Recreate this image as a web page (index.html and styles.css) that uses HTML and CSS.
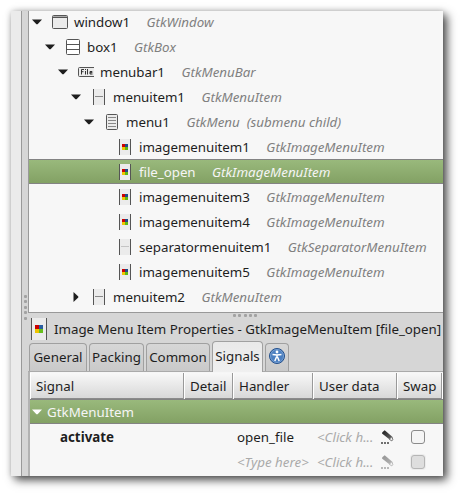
FILE: index.html
```
<!DOCTYPE html>
<html lang="en">
<head>
<meta charset="utf-8">
<title>Widget inspector</title>
<link rel="stylesheet" href="styles.css">
</head>
<body>
<svg class="defs" aria-hidden="true">
  <defs>
    <symbol id="down" viewBox="0 0 10 6"><path d="M0 .5h10L5.6 5.3H4.4z"/></symbol>
    <symbol id="right" viewBox="0 0 6 10"><path d="M.5 0v10L5.3 5.6V4.4z"/></symbol>
    <symbol id="win" viewBox="0 0 16 14"><rect x=".5" y=".5" width="15" height="13" rx="1" fill="#ebebeb" stroke="#555"/><path d="M1 1.5h14" stroke="#aaa"/><path d="M1 2.5h14" stroke="#555"/></symbol>
    <symbol id="box" viewBox="0 0 14 16"><rect x=".5" y=".5" width="13" height="15" rx="1" fill="#fff" stroke="#555"/><path d="M1 5.5h12M1 10.5h12" stroke="#555"/></symbol>
    <symbol id="bar" viewBox="0 0 16 10"><path d="M16 .5H1.5a1 1 0 0 0-1 1v7a1 1 0 0 0 1 1H16" fill="#ebebeb" stroke="#555"/><path d="M3.500 7.500v-5H6M3.500 4.700H5.500M7.500 4v3.500M7.500 2v1M9.500 2v5.500M14.500 7h-2.500v-2.500h2v1.200h-2" fill="none" stroke="#222" stroke-width=".9"/></symbol>
    <symbol id="item" viewBox="0 0 12 16"><path d="M0 0h12v16H0z" fill="#ebebeb"/><path d="M.5 0v16M11.500 0v16" stroke="#555"/><path d="M2 7.500h8" stroke="#888"/></symbol>
    <symbol id="sep" viewBox="0 0 12 16"><path d="M0 0h12v16H0z" fill="#ebebeb"/><path d="M.5 0v16M11.500 0v16" stroke="#555"/><path d="M2 7.500h8" stroke="#c4c4c4"/></symbol>
    <symbol id="menu" viewBox="0 0 12 16"><rect x=".5" y=".5" width="11" height="15" rx="1" fill="#ebebeb" stroke="#555"/><path d="M2 3.500h8M2 6.500h8M2 9.500h8M2 12.500h8" stroke="#888"/></symbol>
    <symbol id="img" viewBox="0 0 12 16"><path d="M0 0h12v16H0z" fill="#ebebeb"/><path d="M.5 0v16M11.500 0v16" stroke="#555"/><path d="M3 5h3v3H3z" fill="#c00"/><path d="M6 5h3v3H6z" fill="#204a87"/><path d="M3 8h3v3H3z" fill="#edc400"/><path d="M6 8h3v3H6z" fill="#5cb811"/></symbol>
    <symbol id="img-lg" viewBox="0 0 16 22"><path d="M0 0h16v22H0z" fill="#ebebeb"/><path d="M.5 0v22M15.500 0v22" stroke="#555"/><path d="M4 7h4v4H4z" fill="#c00"/><path d="M8 7h4v4H8z" fill="#2a5ea0"/><path d="M4 11h4v4H4z" fill="#edc400"/><path d="M8 11h4v4H8z" fill="#67bf1c"/></symbol>
    <linearGradient id="ink" x1="0" y1="0" x2="1" y2="1"><stop offset="0" stop-color="#1c1c1c"/><stop offset="1" stop-color="#666"/></linearGradient>
    <symbol id="pencil" viewBox="0 0 13 14"><path d="M1.300 2.200 3.700.3 11 6.500 8.300 9.300 1 3.500z" fill="url(#ink)"/><path d="M8.300 9.300 11 6.700l.8 3-1 1.200z" fill="#eee" stroke="#555" stroke-width=".8"/><path d="M0 13h2M3 13h2M6 13h2" stroke="#444" stroke-width="1.500"/></symbol>
  </defs>
</svg>
<main class="window">
  <div class="edge"></div>
  <div class="grip"><i></i><i></i><i></i><i></i><i></i></div>
  <div class="content">
    <section class="tree">
      <div class="row d0"><svg class="down"><use href="#down"/></svg><span class="icon"><svg width="16" height="14"><use href="#win"/></svg></span><b>window1</b><em>GtkWindow</em></div>
      <div class="row d1"><svg class="down"><use href="#down"/></svg><span class="icon"><svg width="14" height="16"><use href="#box"/></svg></span><b>box1</b><em>GtkBox</em></div>
      <div class="row d2"><svg class="down"><use href="#down"/></svg><span class="icon"><svg width="16" height="10"><use href="#bar"/></svg></span><b>menubar1</b><em>GtkMenuBar</em></div>
      <div class="row d3"><svg class="down"><use href="#down"/></svg><span class="icon"><svg width="12" height="16"><use href="#item"/></svg></span><b>menuitem1</b><em>GtkMenuItem</em></div>
      <div class="row d4"><svg class="down"><use href="#down"/></svg><span class="icon"><svg width="12" height="16"><use href="#menu"/></svg></span><b>menu1</b><em>GtkMenu&nbsp; (submenu child)</em></div>
      <div class="row d5"><span class="icon"><svg width="12" height="16"><use href="#img"/></svg></span><b>imagemenuitem1</b><em>GtkImageMenuItem</em></div>
      <div class="row d5 selected"><span class="icon"><svg width="12" height="16"><use href="#img"/></svg></span><b>file_open</b><em>GtkImageMenuItem</em></div>
      <div class="row d5"><span class="icon"><svg width="12" height="16"><use href="#img"/></svg></span><b>imagemenuitem3</b><em>GtkImageMenuItem</em></div>
      <div class="row d5"><span class="icon"><svg width="12" height="16"><use href="#img"/></svg></span><b>imagemenuitem4</b><em>GtkImageMenuItem</em></div>
      <div class="row d5"><span class="icon"><svg width="12" height="16"><use href="#sep"/></svg></span><b>separatormenuitem1</b><em>GtkSeparatorMenuItem</em></div>
      <div class="row d5"><span class="icon"><svg width="12" height="16"><use href="#img"/></svg></span><b>imagemenuitem5</b><em>GtkImageMenuItem</em></div>
      <div class="row d3"><svg class="right"><use href="#right"/></svg><span class="icon"><svg width="12" height="16"><use href="#item"/></svg></span><b>menuitem2</b><em>GtkMenuItem</em></div>
    </section>
    <div class="handle"><i></i><i></i><i></i><i></i><i></i></div>
    <h1 class="title"><svg width="16" height="22"><use href="#img-lg"/></svg><span>Image Menu Item Properties - GtkImageMenuItem [file_open]</span></h1>
    <nav class="tabs">
      <span class="tab general">General</span><span class="tab packing">Packing</span><span class="tab common">Common</span><span class="tab active">Signals</span><span class="tab access"><svg width="16" height="16" viewBox="0 0 16 16"><circle cx="8" cy="8" r="7.500" fill="#4b7fc0" stroke="#24508c"/><circle cx="8" cy="8" r="6.500" fill="none" stroke="#86abd8" stroke-width=".7"/><circle cx="8" cy="4" r="1.400" fill="#fff"/><path d="M3.500 6.500 8 7l4.500-.5M8 6.500v3M7.500 9l-1.700 4M8.500 9l1.700 4" fill="none" stroke="#fff" stroke-width="1.500"/></svg></span>
    </nav>
    <section class="table">
      <div class="grid head"><span>Signal</span><span>Detail</span><span>Handler</span><span>User data</span><span>Swap</span><span></span></div>
      <div class="group"><svg class="down"><use href="#down"/></svg><span>GtkMenuItem</span></div>
      <div class="grid line"><strong>activate</strong><span></span><span>open_file</span><span class="data"><em>&lt;Click h...</em><svg width="13" height="14"><use href="#pencil"/></svg></span><span class="swap"><i class="check"></i></span></div>
      <div class="grid line empty"><span></span><span></span><em>&lt;Type here&gt;</em><span class="data"><em>&lt;Click h...</em><svg width="13" height="14"><use href="#pencil"/></svg></span><span class="swap"><i class="check"></i></span></div>
    </section>
  </div>
</main>
</body>
</html>
```
FILE: styles.css
```
* { box-sizing: border-box; }
body { margin: 0; padding: 11px; width: 462px; height: 495px; overflow: hidden; background: #fff; color: #1e1e1e; font: 13.33px/24px "Noto Sans", sans-serif; }
.defs { position: absolute; width: 0; height: 0; }
svg { display: block; flex: none; }
i { display: block; flex: none; }
.window { width: 432px; height: 465px; display: flex; background: #d6d6d6; box-shadow: 4px 4px 9px rgba(0,0,0,.7), 0 0 6px rgba(0,0,0,.18); }
.edge { width: 10px; background: #ebebeb; }
.grip { width: 7px; border-left: 1px solid #999; display: flex; flex-direction: column; align-items: center; gap: 2.4px; padding: 284px 0 0; }
.grip i, .handle i { width: 3px; height: 3px; border-radius: 1px; background: #a2a2a2; }
.content { width: 415px; overflow: hidden; }
.tree { height: 302px; overflow: hidden; background: #f7f7f7; border-left: 1px solid #999; border-bottom: 1px solid #999; }
.row { height: 25px; display: flex; align-items: center; white-space: nowrap; }
.row:first-child { margin-top: -2px; }
.row b { font-weight: 400; letter-spacing: -.04px; }
.row em { margin-left: 16.5px; color: #808080; }
.d0 { padding-left: 3px; } .d1 { padding-left: 16px; } .d2 { padding-left: 29px; } .d3 { padding-left: 42px; } .d4 { padding-left: 55px; } .d5 { padding-left: 87px; }
.down { width: 10px; height: 6px; fill: #1e1e1e; }
.row .down { margin-right: 9px; }
.right { width: 6px; height: 10px; margin: 0 11px 0 2px; fill: #1e1e1e; }
.icon { width: 18px; height: 16px; margin-right: 5px; display: flex; align-items: center; justify-content: center; }
.selected, .group { background: linear-gradient(#99b97c, #83a164); border-top: 1px solid #838383; border-bottom: 1px solid #838383; color: #f5f5f5; }
.row.selected em { color: #f5f5f5; }
.handle { height: 5px; display: flex; justify-content: center; gap: 2.4px; padding: 1px 0 0 19px; }
.title { height: 22px; margin: 0; padding-left: 3px; display: flex; align-items: center; gap: 7px; font-size: 13.33px; font-weight: 400; letter-spacing: -.02px; white-space: nowrap; }
.tabs { height: 32px; padding-left: 1px; display: flex; align-items: flex-end; gap: 2px; border-bottom: 1px solid #aaa; }
.tab { height: 28px; border: 1px solid #a0a0a0; border-bottom: 0; border-radius: 4px 4px 0 0; background: linear-gradient(#d7d7d7, #c9c9c9); display: flex; justify-content: center; line-height: 27px; }
.general { width: 58px; } .packing { width: 55px; } .common { width: 64px; }
.active { width: 51px; height: 31px; margin-bottom: -1px; background: linear-gradient(#e9e9e9, #f0f0f0); line-height: 28px; }
.access { width: 24px; padding-top: 4px; }
.table { height: 104px; border-left: 2px solid #b2b2b2; background: #f7f7f7; }
.grid { display: grid; grid-template-columns: 154px 49px 80px 84px 45px 1fr; white-space: nowrap; }
.head { height: 27px; border-top: 1px solid #f6f6f6; border-bottom: 1px solid #8b8b8b; background: linear-gradient(#f8f8f8, #d8d8d8); line-height: 26px; }
.head span { padding-left: 6px; border-right: 1px solid #999; box-shadow: inset 1px 0 #fff; }
.head span:last-child { border-right: 0; }
.group { height: 25px; display: flex; align-items: center; gap: 5px; padding-left: 2px; }
.group .down { fill: #fff; }
.line { height: 25px; line-height: 26px; }
.line > strong { padding-left: 30px; }
.line > :nth-child(3) { padding-left: 4px; }
.line em { color: #aaa; }
.data { display: flex; align-items: center; padding-left: 4px; }
.data em { width: 64px; }
.swap { padding: 6px 0 0 14px; }
.check { width: 14px; height: 14px; border: 1px solid #8b8b8b; border-radius: 3px; background: #f5f5f5; }
.empty svg { opacity: .45; }
.empty .check { border-color: #b5b5b5; background: #dedede; box-shadow: 0 0 0 1px #ececec; }
```
